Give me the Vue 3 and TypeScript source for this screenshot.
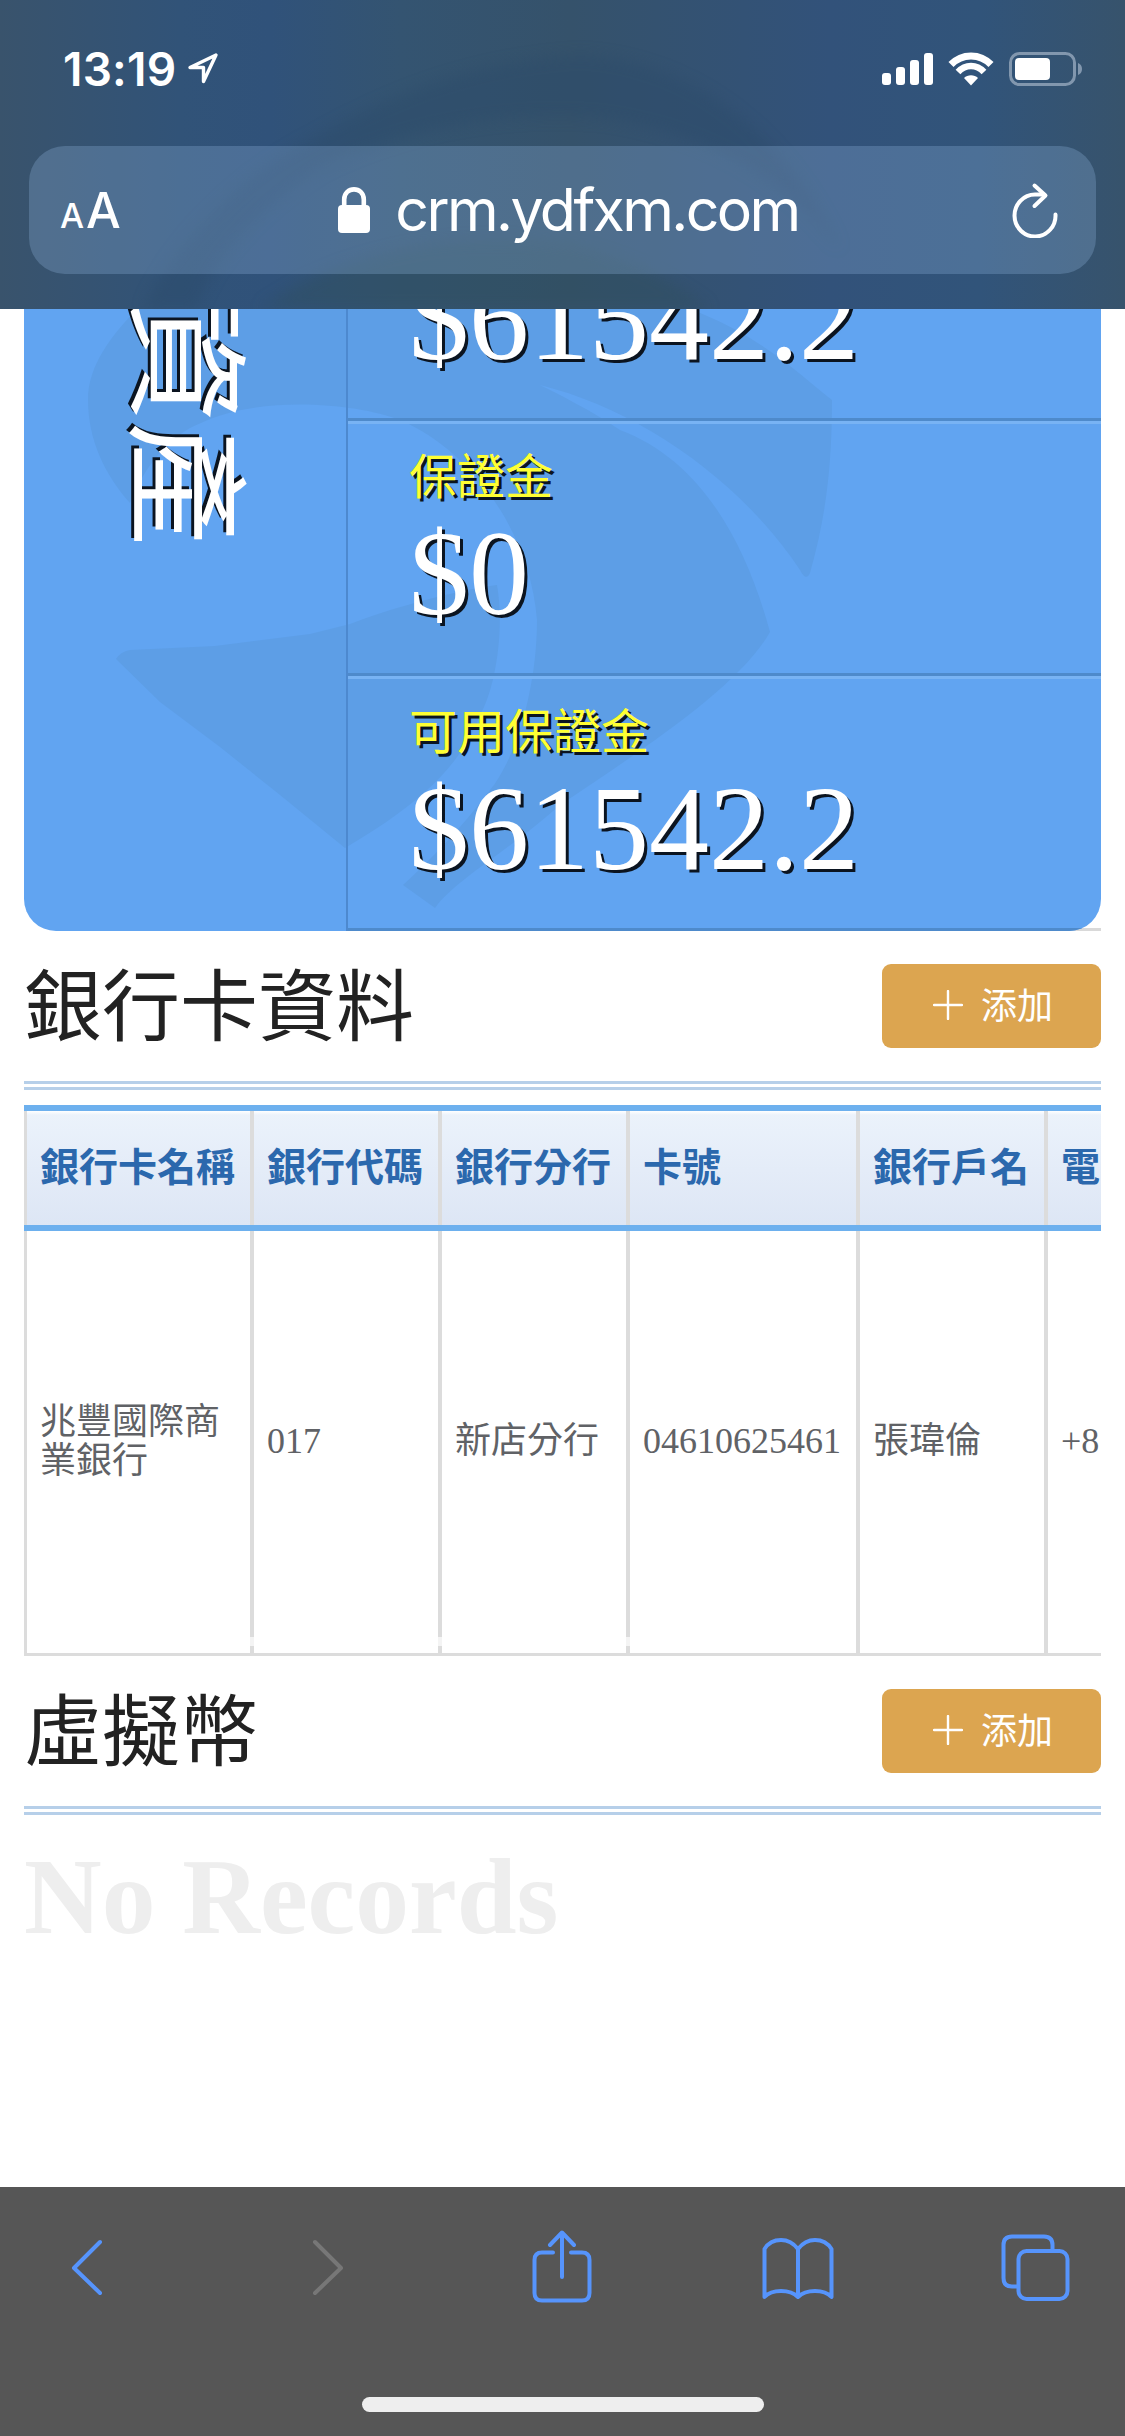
<script setup lang="ts">
interface Metric {
  label: string
  value: string
}

interface Column {
  title: string
  value: string
  width: number
  notched?: boolean
}

const metrics: Metric[] = [
  { label: '', value: '$61542.2' },
  { label: '保證金', value: '$0' },
  { label: '可用保證金', value: '$61542.2' },
]

const columns: Column[] = [
  { title: '銀行卡名稱', value: '兆豐國際商業銀行', width: 230, notched: true },
  { title: '銀行代碼', value: '017', width: 188, notched: true },
  { title: '銀行分行', value: '新店分行', width: 188, notched: true },
  { title: '卡號', value: '04610625461', width: 230 },
  { title: '銀行戶名', value: '張瑋倫', width: 188 },
  { title: '電', value: '+8', width: 53 },
]

const bars: number[] = [12, 18, 25, 32]
</script>

<template>
  <div class="screen">
    <header class="browser-top">
      <svg class="top-shade" viewBox="0 0 1125 309" aria-hidden="true">
        <path d="M144 309C175 235 250 170 310 140C390 95 470 62 580 55C680 60 780 120 840 250C780 170 690 130 600 118C500 110 400 130 320 170C250 215 215 260 196 309Z" fill="#2a4a68" opacity=".42" />
        <path d="M260 309C340 250 470 225 590 250Q660 270 710 309Z" fill="#2f4c58" opacity=".35" />
      </svg>
      <div class="status">
        <div class="clock">
          <span>13:19</span>
          <svg width="32" height="32" viewBox="0 0 32 32"><path d="M29 3L3 15.500H16.500V29.500Z" fill="none" stroke="#fff" stroke-width="3.400" stroke-linejoin="round" /></svg>
        </div>
        <div class="signals">
          <div class="bars"><i v-for="h in bars" :key="h" :style="{ height: h + 'px' }"></i></div>
          <svg class="wifi" width="48" height="36" viewBox="0 0 48 36">
            <path d="M4 13.500C15 2 33 2 44 13.500" fill="none" stroke="#fff" stroke-width="7" />
            <path d="M11 21C18.500 13 29.500 13 37 21" fill="none" stroke="#fff" stroke-width="6.500" />
            <path d="M17 27C20.500 23.300 27.500 23.300 31 27L24 34.500Z" fill="#fff" />
          </svg>
          <svg class="battery" width="75" height="36" viewBox="0 0 75 36">
            <rect x="1.500" y="2.500" width="64" height="31" rx="9" fill="none" stroke="#8297ae" stroke-width="3" />
            <rect x="6" y="7" width="35" height="22" rx="4" fill="#fff" />
            <path d="M69 12Q73 13.500 73 18T69 24Z" fill="#8297ae" />
          </svg>
        </div>
      </div>
      <div class="address">
        <div class="reader"><span class="small-a">A</span><span class="big-a">A</span></div>
        <div class="host">
          <svg width="32" height="46" viewBox="0 0 32 46">
            <rect x="0" y="18" width="32" height="28" rx="4" fill="#fff" />
            <path d="M6.200 20V12.500C6.200-1 25.800-1 25.800 12.500V20" fill="none" stroke="#fff" stroke-width="4.600" />
          </svg>
          <span>crm.ydfxm.com</span>
        </div>
        <svg class="reload" width="48" height="56" viewBox="0 0 48 56">
          <path d="M43.500 32.500A20.500 21 0 1 1 23 12.500H32" fill="none" stroke="#fff" stroke-width="4" stroke-linecap="round" />
          <path d="M22.500 3.500L33.500 13.500L22.500 24" fill="none" stroke="#fff" stroke-width="4" stroke-linecap="round" stroke-linejoin="round" />
        </svg>
      </div>
    </header>

    <main class="page">
      <div class="card-wrap">
        <section class="card">
          <svg class="watermark" viewBox="24 309 1077 622" aria-hidden="true">
            <g fill="#5d9ee6">
              <path d="M137 309C112 335 88 365 88 400C88 440 105 475 130 503C145 465 170 435 201 423C260 395 355 403 400 420C470 450 530 530 537 620C537 690 515 760 490 790C460 830 430 860 403 885L435 908C455 880 510 850 560 805C650 745 740 685 770 632C745 540 700 460 620 430C590 410 562 396 540 385C640 410 740 480 800 570Q806 582 810 573C825 520 832 470 832 400C800 375 760 335 690 309Z" />
              <path d="M116 659Q120 652 130 650L215 646L310 634L350 624C400 605 460 590 497 585C505 630 495 690 480 715C460 770 410 810 345 848L280 795L220 747L160 702Z" />
            </g>
          </svg>
          <div class="card-side"><span>資產</span></div>
          <div class="metrics">
            <div v-for="(m, i) in metrics" :key="i" class="metric">
              <div class="metric-label">{{ m.label }}</div>
              <div class="metric-value">{{ m.value }}</div>
            </div>
          </div>
        </section>
      </div>

      <section class="block">
        <div class="block-head">
          <h2>銀行卡資料</h2>
          <button class="add">
            <svg width="30" height="30" viewBox="0 0 30 30"><path d="M15 1V29M1 15H29" stroke="#fff" stroke-width="2.400" stroke-linecap="round" /></svg>
            <span>添加</span>
          </button>
        </div>
        <div class="double-rule"></div>
        <div class="table">
          <div class="row head">
            <div v-for="c in columns" :key="c.title" class="cell" :style="{ width: c.width + 'px' }">{{ c.title }}</div>
          </div>
          <div class="row body">
            <div v-for="c in columns" :key="c.title" class="cell" :class="{ notched: c.notched }" :style="{ width: c.width + 'px' }">{{ c.value }}</div>
          </div>
        </div>
      </section>

      <section class="block">
        <div class="block-head">
          <h2>虛擬幣</h2>
          <button class="add">
            <svg width="30" height="30" viewBox="0 0 30 30"><path d="M15 1V29M1 15H29" stroke="#fff" stroke-width="2.400" stroke-linecap="round" /></svg>
            <span>添加</span>
          </button>
        </div>
        <div class="double-rule"></div>
        <div class="empty">No Records</div>
      </section>
    </main>

    <footer class="browser-bottom">
      <nav class="tools">
        <svg viewBox="0 0 76 80"><path d="M52 16L26 42L52 67" /></svg>
        <svg class="off" viewBox="0 0 76 80"><path d="M30 16L56 42L30 67" /></svg>
        <svg viewBox="0 0 76 80"><path d="M30 26.500H19Q11.500 26.500 11.500 34V67Q11.500 74.500 19 74.500H59Q66.500 74.500 66.500 67V34Q66.500 26.500 59 26.500H48M39 51V7M27 19L39 6.500L51 19" /></svg>
        <svg viewBox="0 0 76 80"><path d="M38 23Q31 14 21 14Q10 14 4.500 23V71Q10 65 21 65Q32 65 38 71Q44 65 55 65Q66 65 71.500 71V23Q66 14 55 14Q45 14 38 23V71" /></svg>
        <svg viewBox="0 0 76 80"><path d="M20.500 60.500H15Q6.500 60.500 6.500 52V19Q6.500 10.500 15 10.500H47Q55.500 10.500 55.500 19V24.500" /><rect x="21.500" y="25" width="49" height="48" rx="8" /></svg>
      </nav>
      <div class="home-indicator"></div>
    </footer>
  </div>
</template>

<style>
body {
  margin: 0;
  background: #fff;
}
</style>

<style scoped>
* {
  box-sizing: border-box;
}
.screen {
  width: 1125px;
  height: 2436px;
  display: flex;
  flex-direction: column;
  overflow: hidden;
  background: #fff;
  font-family: "Liberation Serif", "Noto Sans CJK TC", serif;
}
.browser-top {
  position: relative;
  height: 309px;
  flex: none;
  overflow: hidden;
  color: #fff;
  font-family: Inter, sans-serif;
  background: linear-gradient(90deg, #39536c 0, #315378 180px, #30527a 270px, #345471 400px, #35526b 570px, #32527a 830px, #31547a 980px, #37536c 1125px);
}
.top-shade {
  position: absolute;
  inset: 0;
  filter: blur(7px);
}
.status {
  position: relative;
  height: 146px;
  padding: 45px 41px 0 63px;
  display: flex;
  justify-content: space-between;
}
.clock {
  display: flex;
  height: 48px;
  gap: 11px;
  font-size: 46px;
  line-height: 48px;
  font-weight: 600;
  letter-spacing: 0.200px;
}
.clock svg {
  margin-top: 7px;
}
.signals {
  display: flex;
  height: 42px;
  align-items: flex-end;
}
.bars {
  display: flex;
  align-items: flex-end;
  gap: 5px;
  height: 32px;
  margin: 0 14px 2px 0;
}
.bars i {
  width: 9px;
  border-radius: 3px;
  background: #fff;
}
.wifi {
  margin-right: 14px;
}
.address {
  position: relative;
  margin: 0 29px;
  height: 128px;
  border-radius: 36px;
  background: rgba(150, 190, 230, 0.270);
  display: flex;
  align-items: center;
  justify-content: space-between;
  padding: 0 36px 0 31px;
}
.reader {
  display: flex;
  align-items: baseline;
  gap: 2px;
  width: 90px;
  font-weight: 450;
}
.small-a {
  font-size: 34px;
}
.big-a {
  font-size: 49px;
}
.host {
  display: flex;
  align-items: center;
  gap: 25px;
  margin-right: 25px;
  font-size: 59px;
  line-height: 80px;
  letter-spacing: -2.600px;
}
.page {
  flex: 1;
  padding: 0 24px;
}
.card-wrap {
  background: linear-gradient(#d9d9d9, #d9d9d9) right bottom / 60px 3px no-repeat;
}
.card {
  position: relative;
  display: flex;
  height: 622px;
  overflow: hidden;
  border-radius: 0 0 32px 32px;
  background: #61a4f1;
}
.watermark {
  position: absolute;
  inset: 0;
}
.card-side {
  position: relative;
  width: 322px;
  padding: 0 0 0 98px;
}
.card-side span {
  display: block;
  height: 250px;
  margin-top: -11px;
  writing-mode: vertical-rl;
  text-orientation: sideways;
  font-size: 124px;
  line-height: 120px;
  color: #fff;
  text-shadow: -3px 3px 0 #0b1420;
}
.metrics {
  position: relative;
  flex: 1;
  margin-top: -143px;
  border-left: 2px solid #4d89cf;
}
.metric {
  height: 255px;
  padding: 21px 0 0 61px;
  border-top: 3px solid #78b3f4;
  border-bottom: 3px solid #4e8acb;
}
.metric-label {
  height: 66px;
  font-size: 48px;
  line-height: 66px;
  color: #ffff33;
  text-shadow: 3px 3px 0 #0b1420;
}
.metric-value {
  font-size: 120px;
  line-height: 126px;
  color: #fff;
  text-shadow: 3px 3px 0 #0b1420;
}
.block-head {
  display: flex;
  justify-content: space-between;
  align-items: flex-start;
  height: 150px;
  padding-top: 33px;
}
h2 {
  margin: 3px 0 0;
  font-size: 78px;
  line-height: 84px;
  font-weight: 400;
  color: #222;
}
.add {
  display: flex;
  align-items: center;
  justify-content: center;
  gap: 18px;
  width: 219px;
  height: 84px;
  padding: 0 0 0 3px;
  border: 0;
  border-radius: 9px;
  background: #dca550;
  color: #fff;
  font-family: "Noto Sans CJK TC", sans-serif;
  font-size: 36px;
  line-height: 84px;
}
.add svg {
  margin-top: -3px;
}
.add span {
  margin-top: -6px;
}
.double-rule {
  height: 9px;
  border-top: 3px solid #b6cfe9;
  border-bottom: 3px solid #b6cfe9;
}
.table {
  margin-top: 15px;
  overflow: hidden;
}
.row {
  display: flex;
}
.cell {
  position: relative;
  flex: none;
  display: flex;
  align-items: center;
  padding: 0 12px 0 13px;
  border-right: 4px solid #dcdcdc;
}
.cell:first-child {
  border-left: 3px solid #dcdcdc;
}
.row .cell:last-child {
  border-right: 0;
}
.head {
  height: 126px;
  border-top: 6px solid #6db0ee;
  border-bottom: 6px solid #6db0ee;
  background: linear-gradient(#fff 0, #ebf2fb 4px, #dde6f5 100%);
}
.head .cell {
  padding-bottom: 9px;
  font-size: 39px;
  font-weight: 600;
  color: #2b68ad;
  white-space: nowrap;
}
.body {
  height: 425px;
  border-bottom: 3px solid #dcdcdc;
}
.body .cell {
  padding-bottom: 1px;
  font-size: 36px;
  line-height: 39px;
  color: #606266;
}
.notched::after {
  content: "";
  position: absolute;
  right: -4px;
  bottom: 7px;
  width: 4px;
  height: 9px;
  background: #f4f4f4;
}
.empty {
  margin-top: 20px;
  font-size: 107.500px;
  line-height: 124px;
  font-weight: 700;
  color: #eee;
}
.browser-bottom {
  flex: none;
  height: 249px;
  background: #565656;
  display: flex;
  flex-direction: column;
  align-items: center;
  justify-content: space-between;
  padding: 39px 0 24px;
}
.tools {
  width: 100%;
  display: flex;
  justify-content: space-between;
  padding: 0 52px 0 48px;
}
.tools svg {
  width: 76px;
  height: 80px;
  fill: none;
  stroke: #5694fc;
  stroke-width: 4;
  stroke-linecap: round;
  stroke-linejoin: round;
}
.tools .off {
  stroke: #777;
}
.home-indicator {
  width: 402px;
  height: 15px;
  border-radius: 8px;
  background: #eee;
}
</style>
